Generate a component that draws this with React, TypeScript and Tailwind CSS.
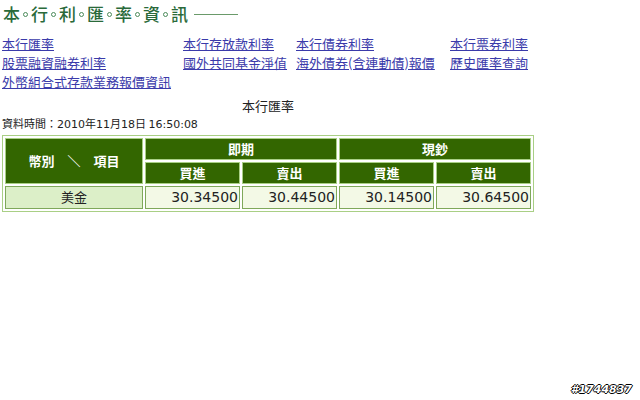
import React from 'react';

const cjk = '"Noto Sans CJK TC", "DejaVu Sans", sans-serif';
const num = '"DejaVu Sans", "Noto Sans CJK TC", sans-serif';

const links: [string, string, string, string][] = [
  ['本行匯率', '本行存放款利率', '本行債券利率', '本行票券利率'],
  ['股票融資融券利率', '國外共同基金淨值', '海外債券(含連動債)報價', '歷史匯率查詢'],
  ['外幣組合式存款業務報價資訊', '', '', ''],
];

const rates = [{ name: '美金', spotBuy: '30.34500', spotSell: '30.44500', cashBuy: '30.14500', cashSell: '30.64500' }];

export default function App() {
  const title = ['本', '行', '利', '匯', '率', '資', '訊'];
  return (
    <div className="relative w-[640px] h-[400px] bg-white overflow-hidden" style={{ fontFamily: cjk }}>
      {/* page title */}
      <div className="flex items-center pl-[3px] pt-[2px] h-[24px]">
        {title.map((c, i) => (
          <React.Fragment key={i}>
            <span className="text-[17px] leading-none font-medium text-[#2a6a3a]">{c}</span>
            {i < title.length - 1 && (
              <span className="mx-[3px] mt-[2px] w-[5px] h-[5px] rounded-full border border-[#4a8a5a]" />
            )}
          </React.Fragment>
        ))}
        <div className="ml-[6px] mt-[2px] w-[44px] h-px bg-[#6a9a6a]" />
      </div>

      {/* links */}
      <div className="mt-[10px] pl-[2px] text-[13px] leading-[19px]">
        {links.map((row, r) => (
          <div key={r} className="grid grid-cols-[181px_113px_154px_auto]">
            {row.map((l, c) => (
              <a key={c} href="#" className="text-[#3a3aaa] underline whitespace-nowrap">
                {l}
              </a>
            ))}
          </div>
        ))}
      </div>

      <div className="mt-[6px] w-[536px] text-center text-[13px] leading-[18px] text-[#222]">本行匯率</div>
      <div className="pl-[2px] text-[11px] leading-[16px] text-[#222]">
        資料時間：<span style={{ fontFamily: num }}>2010</span>年<span style={{ fontFamily: num }}>11</span>月<span style={{ fontFamily: num }}>18</span>日 <span style={{ fontFamily: num }}>16:50:08</span>
      </div>

      {/* rate table */}
      <table className="ml-[2px] mt-[2px] border-separate border-spacing-[2px] border border-[#a9cf85] bg-white w-[532px]">
        <thead>
          <tr className="h-[22px]">
            <th rowSpan={2} className="w-[138px] bg-[#336600] text-white text-[13px] font-bold border border-[#a9cf85]">
              幣別　＼　項目
            </th>
            <th colSpan={2} className="bg-[#336600] text-white text-[13px] font-bold border border-[#a9cf85]">即期</th>
            <th colSpan={2} className="bg-[#336600] text-white text-[13px] font-bold border border-[#a9cf85]">現鈔</th>
          </tr>
          <tr className="h-[21px]">
            {['買進', '賣出', '買進', '賣出'].map((h, i) => (
              <th key={i} className="bg-[#336600] text-white text-[13px] font-bold border border-[#a9cf85]">{h}</th>
            ))}
          </tr>
        </thead>
        <tbody>
          {rates.map((r) => (
            <tr key={r.name} className="h-[22px]">
              <td className="bg-[#dcefc8] text-center text-[13px] text-[#222] border border-[#7fa85a]">{r.name}</td>
              {[r.spotBuy, r.spotSell, r.cashBuy, r.cashSell].map((v, i) => (
                <td
                  key={i}
                  className="bg-[#f3f9e6] text-right pr-[1px] text-[14px] text-[#222] border border-[#7fa85a]"
                  style={{ fontFamily: num }}
                >
                  {v}
                </td>
              ))}
            </tr>
          ))}
        </tbody>
      </table>

      {/* watermark */}
      <div
        className="absolute right-[8px] bottom-[2px] text-[11px] font-bold italic text-white"
        style={{ fontFamily: '"DejaVu Sans", sans-serif', textShadow: '1px 0 #000, -1px 0 #000, 0 1px #000, 0 -1px #000' }}
      >
        #1744837
      </div>
    </div>
  );
}
